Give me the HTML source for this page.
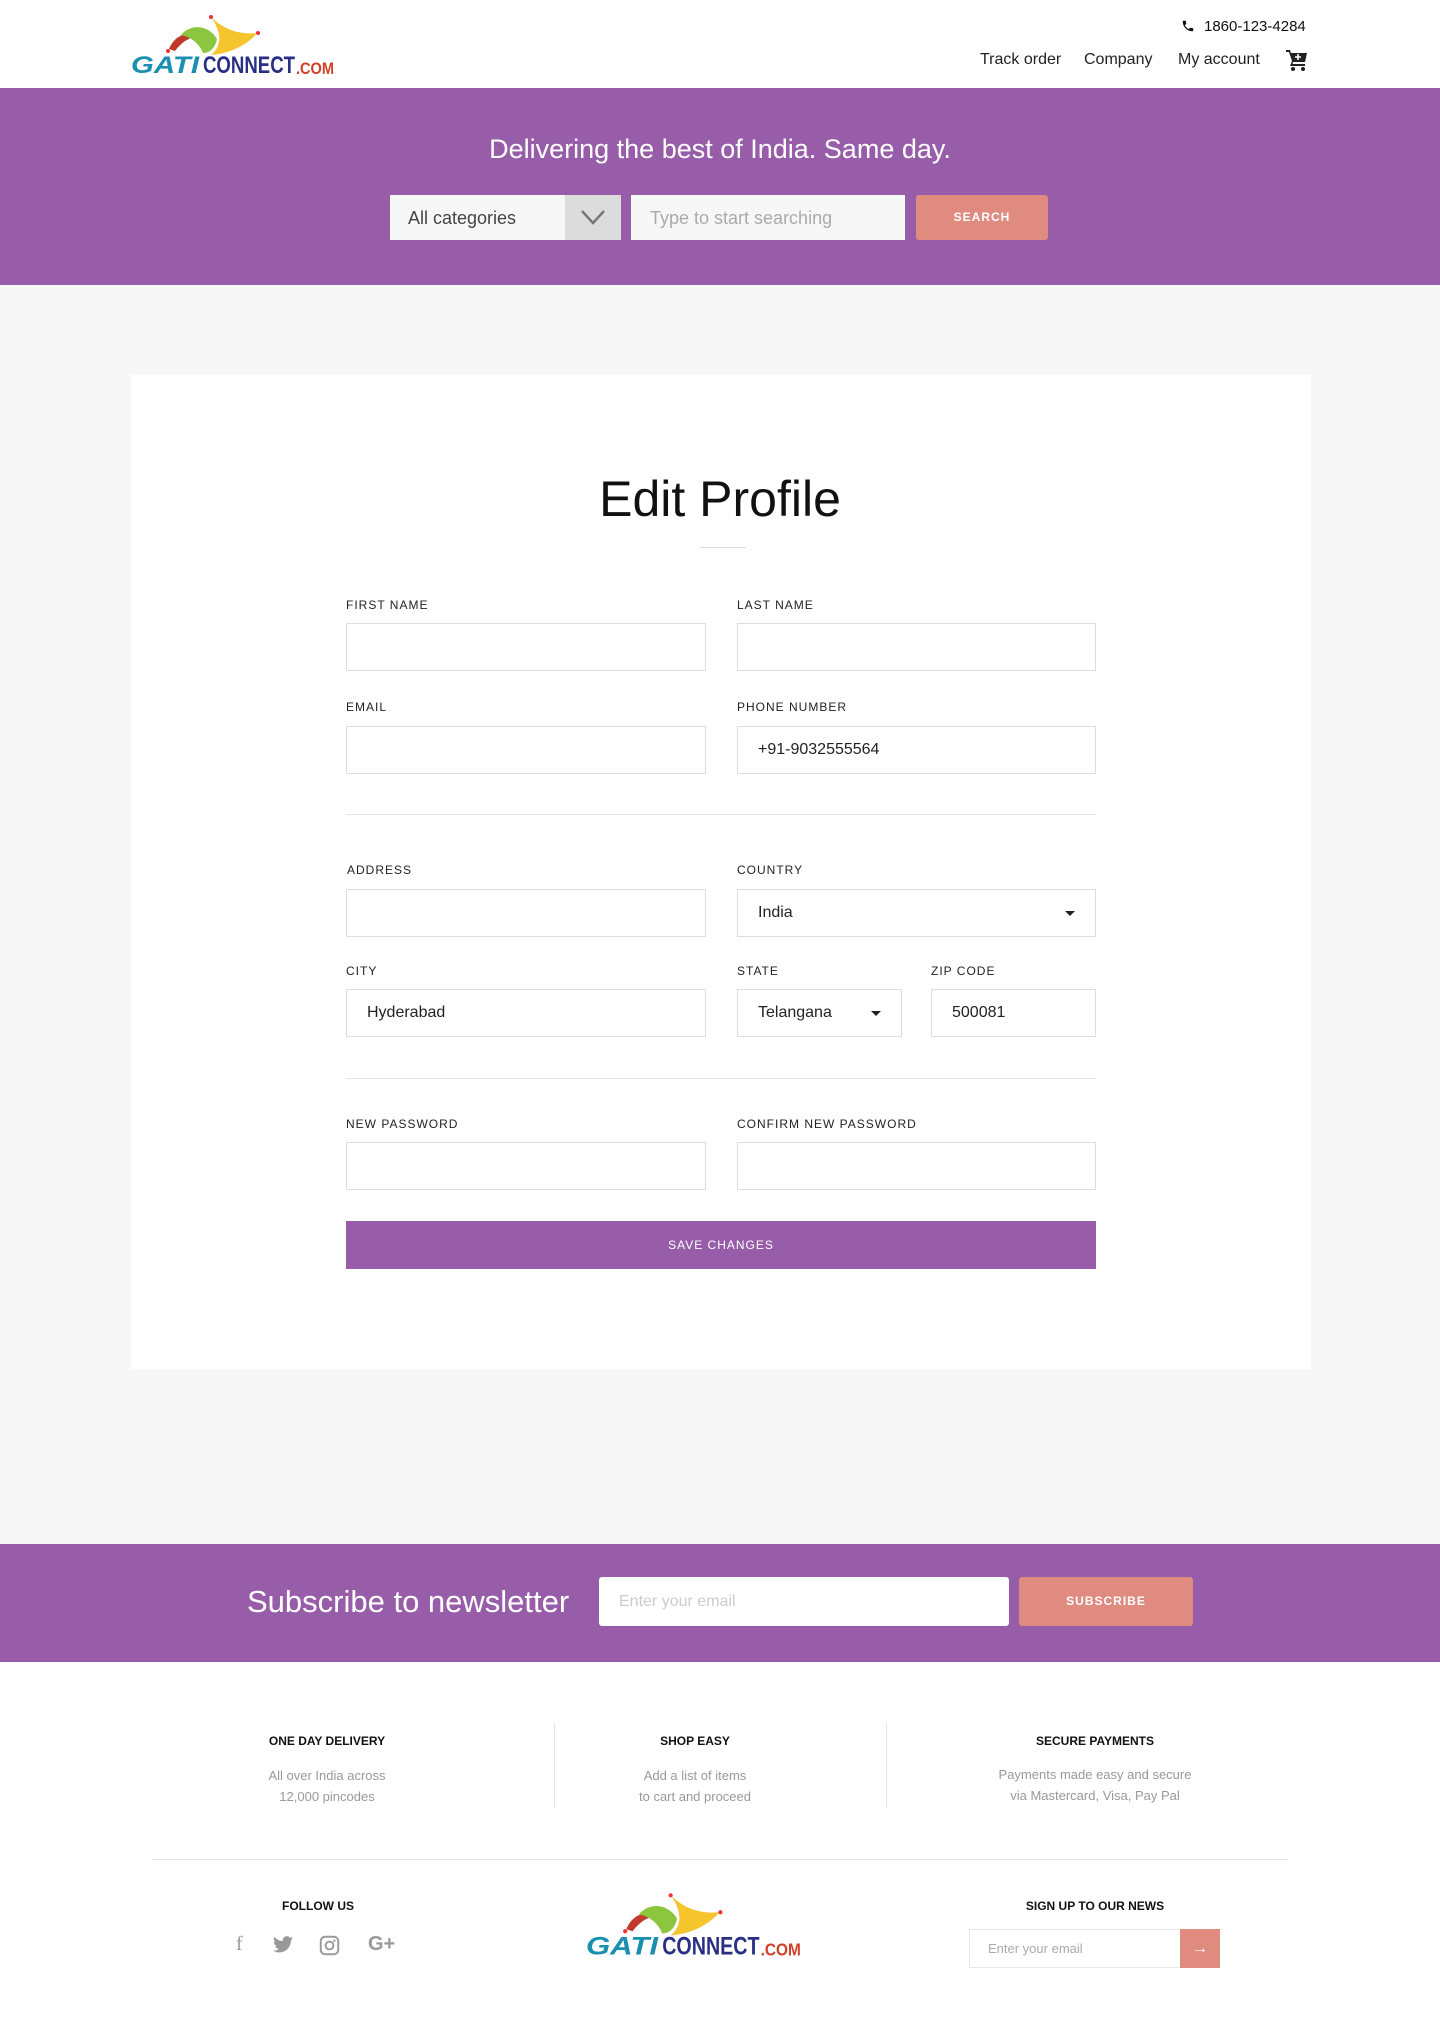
<!DOCTYPE html>
<html><head><meta charset="utf-8"><style>
*{margin:0;padding:0;box-sizing:border-box}
body{width:1440px;height:2020px;position:relative;background:#fff;font-family:"Liberation Sans",sans-serif;color:#222;overflow:hidden}
.a{position:absolute}
.lbl{position:absolute;font-size:12px;letter-spacing:1px;color:#222}
.in{position:absolute;height:48px;border:1px solid #dedede;background:#fff;font-size:16px;color:#222;padding-left:20px;line-height:46px}
.car{position:absolute;right:20px;top:21px;width:0;height:0;border-left:5px solid transparent;border-right:5px solid transparent;border-top:5px solid #222}
.hr{position:absolute;height:1px;background:#e3e3e3}
.ft{position:absolute;font-size:12px;font-weight:bold;text-align:center;color:#111}
.fd{position:absolute;font-size:13px;color:#999;text-align:center;line-height:21px}
</style></head><body>
<svg class="a" style="left:131px;top:13px" width="206" height="66" viewBox="0 0 206 66">
<path d="M38 36 C44 22 56 18 66 24 C58 24 50 30 44 38 Z" fill="#c0392b"/>
<path d="M50 22 C60 10 78 12 86 26 C84 36 78 40 72 40 C68 30 60 24 50 22 Z" fill="#8cc63f"/>
<path d="M80 4 C90 18 92 32 80 42 C102 40 118 30 126 20 C108 22 92 16 80 4 Z" fill="#f6c42c"/>
<circle cx="80" cy="4" r="2" fill="#e33"/><circle cx="127" cy="20" r="2" fill="#e33"/><circle cx="37" cy="38" r="2" fill="#e33"/>
<text x="0" y="60" font-family="Liberation Sans" font-weight="bold" font-style="italic" font-size="24" fill="#1a8fb0" textLength="68" lengthAdjust="spacingAndGlyphs">GATI</text>
<text x="72" y="60" font-family="Liberation Sans" font-weight="bold" font-size="24" fill="#2a2f86" textLength="92" lengthAdjust="spacingAndGlyphs">CONNECT</text>
<text x="165" y="61" font-family="Liberation Sans" font-weight="bold" font-size="17" fill="#d0402a" textLength="38" lengthAdjust="spacingAndGlyphs">.COM</text>
</svg>
<svg class="a" style="left:1181px;top:19px" width="14" height="14" viewBox="0 0 24 24"><path d="M6.6 10.8a15 15 0 006.6 6.6l2.2-2.2c.3-.3.7-.4 1-.2 1.1.4 2.3.6 3.6.6.6 0 1 .4 1 1V20c0 .6-.4 1-1 1C10.6 21 3 13.4 3 4c0-.6.4-1 1-1h3.5c.6 0 1 .4 1 1 0 1.3.2 2.5.6 3.6.1.3 0 .7-.2 1z" fill="#111"/></svg>
<div class="a" style="left:1204px;top:18px;font-size:15px;color:#111">1860-123-4284</div>
<div class="a" style="left:980px;top:51px;font-size:16px;color:#222">Track order</div>
<div class="a" style="left:1084px;top:51px;font-size:16px;color:#222">Company</div>
<div class="a" style="left:1178px;top:51px;font-size:16px;color:#222">My account</div>
<svg class="a" style="left:1285px;top:48px" width="24" height="24" viewBox="0 0 24 24"><path d="M1 2h4l1 3h16l-2 9H8l-.5 2H20v2H5l2-5L4 4H1z" fill="#222"/><circle cx="8" cy="21" r="2" fill="#222"/><circle cx="18" cy="21" r="2" fill="#222"/><path d="M13 6v6M10 9h6" stroke="#fff" stroke-width="1.6"/></svg>
<div class="a" style="left:0;top:88px;width:1440px;height:197px;background:#975da9"></div>
<div class="a" style="left:0;top:134px;width:1440px;text-align:center;color:#fff;font-size:27px">Delivering the best of India. Same day.</div>
<div class="a" style="left:390px;top:195px;width:231px;height:45px;background:#f7f7f7"></div>
<div class="a" style="left:565px;top:195px;width:56px;height:45px;background:#dcdcdc"></div>
<svg class="a" style="left:580px;top:208px" width="26" height="18"><path d="M2 3l11 12L24 3" stroke="#777" stroke-width="2.5" fill="none"/></svg>
<div class="a" style="left:408px;top:208px;font-size:18px;color:#444">All categories</div>
<div class="a" style="left:631px;top:195px;width:274px;height:45px;background:#f7f7f7"></div>
<div class="a" style="left:650px;top:208px;font-size:18px;color:#aaa">Type to start searching</div>
<div class="a" style="left:916px;top:195px;width:132px;height:45px;background:#df8b80;border-radius:3px;color:#fff;font-size:12px;font-weight:bold;letter-spacing:1px;text-align:center;line-height:45px">SEARCH</div>
<div class="a" style="left:0;top:285px;width:1440px;height:1259px;background:#f7f7f7"></div>
<div class="a" style="left:131px;top:375px;width:1180px;height:994px;background:#fff"></div>
<div class="a" style="left:0;top:470px;width:1440px;text-align:center;font-size:50px;color:#111">Edit Profile</div>
<div class="a" style="left:700px;top:547px;width:46px;height:1px;background:#ddd"></div>
<div class="lbl" style="left:346px;top:598px">FIRST NAME</div>
<div class="lbl" style="left:737px;top:598px">LAST NAME</div>
<div class="in" style="left:346px;top:623px;width:360px"></div>
<div class="in" style="left:737px;top:623px;width:359px"></div>
<div class="lbl" style="left:346px;top:700px">EMAIL</div>
<div class="lbl" style="left:737px;top:700px">PHONE NUMBER</div>
<div class="in" style="left:346px;top:726px;width:360px"></div>
<div class="in" style="left:737px;top:726px;width:359px">+91-9032555564</div>
<div class="hr" style="left:346px;top:814px;width:750px"></div>
<div class="lbl" style="left:347px;top:863px">ADDRESS</div>
<div class="lbl" style="left:737px;top:863px">COUNTRY</div>
<div class="in" style="left:346px;top:889px;width:360px"></div>
<div class="in" style="left:737px;top:889px;width:359px">India<span class="car"></span></div>
<div class="lbl" style="left:346px;top:964px">CITY</div>
<div class="lbl" style="left:737px;top:964px">STATE</div>
<div class="lbl" style="left:931px;top:964px">ZIP CODE</div>
<div class="in" style="left:346px;top:989px;width:360px">Hyderabad</div>
<div class="in" style="left:737px;top:989px;width:165px">Telangana<span class="car"></span></div>
<div class="in" style="left:931px;top:989px;width:165px">500081</div>
<div class="hr" style="left:346px;top:1078px;width:750px"></div>
<div class="lbl" style="left:346px;top:1117px">NEW PASSWORD</div>
<div class="lbl" style="left:737px;top:1117px">CONFIRM NEW PASSWORD</div>
<div class="in" style="left:346px;top:1142px;width:360px"></div>
<div class="in" style="left:737px;top:1142px;width:359px"></div>
<div class="a" style="left:346px;top:1221px;width:750px;height:48px;background:#975da9;color:#fff;font-size:12px;letter-spacing:1px;text-align:center;line-height:48px">SAVE CHANGES</div>
<div class="a" style="left:0;top:1544px;width:1440px;height:118px;background:#975da9"></div>
<div class="a" style="left:247px;top:1584px;font-size:31px;color:#fff">Subscribe to newsletter</div>
<div class="a" style="left:599px;top:1577px;width:410px;height:49px;background:#fff;border-radius:3px;font-size:16px;color:#ccc;padding-left:20px;line-height:49px">Enter your email</div>
<div class="a" style="left:1019px;top:1577px;width:174px;height:49px;background:#df8b80;border-radius:3px;color:#fff;font-size:12px;font-weight:bold;letter-spacing:1px;text-align:center;line-height:49px">SUBSCRIBE</div>
<div class="ft" style="left:177px;top:1734px;width:300px">ONE DAY DELIVERY</div>
<div class="fd" style="left:177px;top:1765px;width:300px">All over India across<br>12,000 pincodes</div>
<div class="a" style="left:554px;top:1723px;width:1px;height:85px;background:#e5e5e5"></div>
<div class="ft" style="left:545px;top:1734px;width:300px">SHOP EASY</div>
<div class="fd" style="left:545px;top:1765px;width:300px">Add a list of items<br>to cart and proceed</div>
<div class="a" style="left:886px;top:1723px;width:1px;height:85px;background:#e5e5e5"></div>
<div class="ft" style="left:945px;top:1734px;width:300px">SECURE PAYMENTS</div>
<div class="fd" style="left:945px;top:1764px;width:300px">Payments made easy and secure<br>via Mastercard, Visa, Pay Pal</div>
<div class="hr" style="left:152px;top:1859px;width:1136px"></div>
<div class="ft" style="left:218px;top:1899px;width:200px">FOLLOW US</div>
<div class="a" style="left:236px;top:1933px;font-size:20px;color:#999;font-family:'Liberation Serif',serif">f</div>
<svg class="a" style="left:273px;top:1936px" width="20" height="17" viewBox="0 0 24 20"><path d="M24 2.4a10 10 0 01-2.8.8A5 5 0 0023.3.5a10 10 0 01-3.1 1.2A4.9 4.9 0 0011.8 6 14 14 0 011.7.9a4.9 4.9 0 001.5 6.6A4.9 4.9 0 01.9 6.9a4.9 4.9 0 003.9 4.8 4.9 4.9 0 01-2.2.1 4.9 4.9 0 004.6 3.4A9.9 9.9 0 010 17.3 14 14 0 007.5 19.5c9.1 0 14-7.5 14-14v-.6A10 10 0 0024 2.4z" fill="#999"/></svg>
<svg class="a" style="left:319px;top:1935px" width="21" height="21" viewBox="0 0 24 24"><rect x="2" y="2" width="20" height="20" rx="5" fill="none" stroke="#999" stroke-width="2.2"/><circle cx="12" cy="12" r="4.5" fill="none" stroke="#999" stroke-width="2.2"/><circle cx="17.5" cy="6.5" r="1.3" fill="#999"/></svg>
<div class="a" style="left:368px;top:1933px;font-size:20px;font-weight:bold;color:#999">G+</div>
<svg class="a" style="left:586px;top:1891px" width="218" height="70" viewBox="0 0 206 66">
<path d="M38 36 C44 22 56 18 66 24 C58 24 50 30 44 38 Z" fill="#c0392b"/>
<path d="M50 22 C60 10 78 12 86 26 C84 36 78 40 72 40 C68 30 60 24 50 22 Z" fill="#8cc63f"/>
<path d="M80 4 C90 18 92 32 80 42 C102 40 118 30 126 20 C108 22 92 16 80 4 Z" fill="#f6c42c"/>
<circle cx="80" cy="4" r="2" fill="#e33"/><circle cx="127" cy="20" r="2" fill="#e33"/><circle cx="37" cy="38" r="2" fill="#e33"/>
<text x="0" y="60" font-family="Liberation Sans" font-weight="bold" font-style="italic" font-size="24" fill="#1a8fb0" textLength="68" lengthAdjust="spacingAndGlyphs">GATI</text>
<text x="72" y="60" font-family="Liberation Sans" font-weight="bold" font-size="24" fill="#2a2f86" textLength="92" lengthAdjust="spacingAndGlyphs">CONNECT</text>
<text x="165" y="61" font-family="Liberation Sans" font-weight="bold" font-size="17" fill="#d0402a" textLength="38" lengthAdjust="spacingAndGlyphs">.COM</text>
</svg>
<div class="ft" style="left:995px;top:1899px;width:200px">SIGN UP TO OUR NEWS</div>
<div class="a" style="left:969px;top:1929px;width:212px;height:39px;border:1px solid #e8e8e8;font-size:13px;color:#aaa;padding-left:18px;line-height:37px">Enter your email</div>
<div class="a" style="left:1180px;top:1929px;width:40px;height:39px;background:#df8b80;color:#fff;font-size:16px;text-align:center;line-height:39px">&#8594;</div>
</body></html>
